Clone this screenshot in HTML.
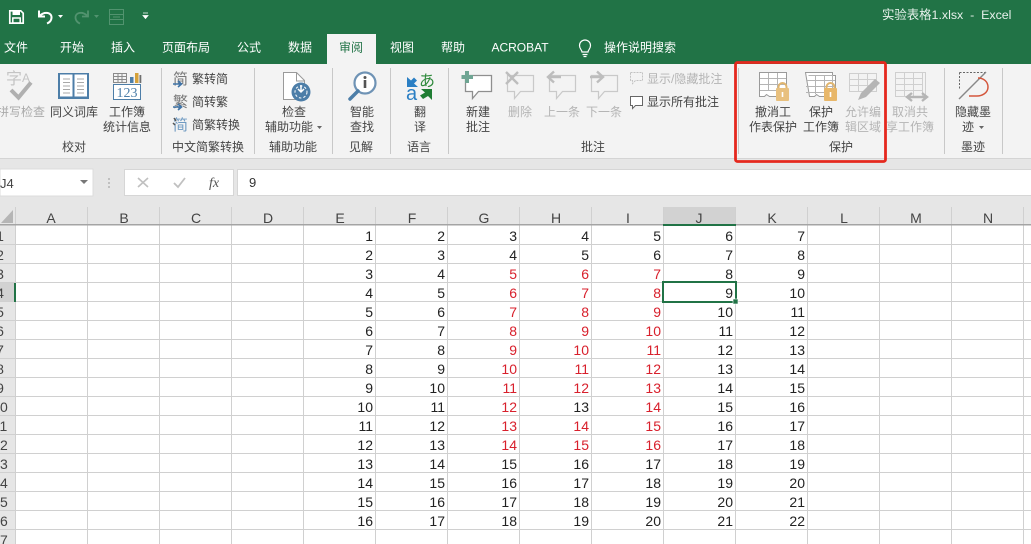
<!DOCTYPE html>
<html lang="zh"><head><meta charset="utf-8"><title>实验表格1.xlsx - Excel</title>
<style>
html,body{margin:0;padding:0;width:1031px;height:544px;overflow:hidden;background:#fff}
svg{display:block}
text{font-family:"Liberation Sans","Noto Sans CJK SC",sans-serif}
.t{font-size:12px;fill:#444;text-anchor:middle}
.g{font-size:12px;fill:#b4b4b4;text-anchor:middle}
.l{font-size:12px;fill:#444}
.tab{font-size:12px;fill:#fff;text-anchor:middle}
.h{font-size:14px;fill:#444;text-anchor:middle}
.rh{font-size:14px;fill:#444;text-anchor:middle}
.c text{font-size:14px;fill:#222;text-anchor:end}
.c text.r{fill:#d8202c}
</style></head><body>
<svg width="1031" height="544" viewBox="0 0 1031 544" xmlns="http://www.w3.org/2000/svg">
<!-- backgrounds -->
<rect width="1031" height="64" fill="#217346"/>
<rect x="327" y="34" width="49" height="31" fill="#f3f3f3"/>
<rect y="64" width="1031" height="94" fill="#f3f3f3"/>
<rect y="158" width="1031" height="49" fill="#e6e6e6"/>
<rect y="158" width="1031" height="1" fill="#d4d4d4"/>
<rect y="207" width="1031" height="18" fill="#e6e6e6"/>
<rect x="0" y="225" width="15" height="319" fill="#e6e6e6"/>

<!-- quick access -->
<g fill="none" stroke="#fff">
<path d="M9.8 10.8h11l2.4 2.4v10h-13.4z" stroke-width="1.7"/>
<rect x="12.5" y="11" width="7.5" height="4" fill="#fff" stroke="none"/>
<rect x="12.8" y="18" width="7.4" height="5" stroke-width="1.5"/>
<path d="M40 15.5c5-4.5 12-3 11.500 2.500-.3 3-2 4.500-4.500 5.500" stroke-width="2"/>
<path d="M39 10.500v6h6" stroke-width="2"/>
</g>
<path d="M58 15h5l-2.500 3z" fill="#fff"/>
<g fill="none" stroke="#52936f" stroke-width="1.800">
<path d="M87 15.500c-5-4.500-12-3-11.500 2.500.3 3 2 4.500 4.500 5.500"/><path d="M88 10.500v6h-6"/>
</g>
<path d="M94 15h5l-2.500 3z" fill="#52936f"/>
<g fill="none" stroke="#52936f"><rect x="109.500" y="9.500" width="14" height="15"/><path d="M110 14.500h13M110 19.500h13M113 17h7"/></g>
<path d="M143 13h5M143 15.500h5l-2.500 3z" fill="#fff" stroke="#fff" stroke-width=".8"/>

<!-- title -->
<text x="882" y="19" font-size="12.400" fill="#e6f0ea" xml:space="preserve">实验表格1.xlsx  -  Excel</text>

<!-- tabs -->
<text class="tab" x="16" y="51.500">文件</text>
<text class="tab" x="72" y="51.500">开始</text>
<text class="tab" x="123" y="51.500">插入</text>
<text class="tab" x="186" y="51.500">页面布局</text>
<text class="tab" x="249" y="51.500">公式</text>
<text class="tab" x="300" y="51.500">数据</text>
<text class="tab" x="351" y="51.500" style="fill:#217346">审阅</text>
<text class="tab" x="402" y="51.500">视图</text>
<text class="tab" x="453" y="51.500">帮助</text>
<text class="tab" x="520" y="51.500">ACROBAT</text>
<g fill="none" stroke="#fff" stroke-width="1.200"><path d="M582 52c0-2-2.500-3-2.500-6.500a5.500 5.500 0 0 1 11 0c0 3.500-2.500 4.500-2.500 6.500z"/><path d="M582.500 54.500h5M583.500 56.500h3"/></g>
<text class="tab" x="640" y="51.500">操作说明搜索</text>

<!-- separators -->
<g stroke="#c8c8c8"><path d="M161.500 68v86M254.500 68v86M332.500 68v86M390.500 68v86M448.500 68v86M738.500 68v86M944.500 68v86M1002.500 68v86"/></g>

<!-- spell -->
<text x="6" y="84" font-size="16" fill="#c4c4c4">字</text><text x="22" y="82" font-size="12" fill="#c4c4c4">A</text>
<path d="M11 90l7.500 7.500 12.500-15" fill="none" stroke="#b0b0b0" stroke-width="4"/>
<!-- book -->
<path d="M58 73h31v26H58z" fill="#4d7ea8"/>
<path d="M60 74.500h12.500v22H60zM74.500 74.500H87v22H74.500z" fill="#fff"/>
<path d="M63 79h7M63 82.500h7M63 86h7M63 89.500h7M63 93h7M77 79h7M77 82.500h7M77 86h7M77 89.500h7M77 93h7" stroke="#a8a8a8"/>
<!-- stats -->
<g fill="none" stroke="#8a8a8a"><rect x="113.500" y="73.500" width="13" height="9"/><path d="M113 76.500h14M113 79.500h14M118 73v10M122 73v10"/></g>
<rect x="130" y="77" width="3.500" height="6" fill="#4d7ea8"/><rect x="135" y="73" width="3.500" height="10" fill="#d5a13a"/><rect x="139.500" y="75" width="1.800" height="8" fill="#6f6f6f"/>
<rect x="113.500" y="84.500" width="27" height="15" fill="#fff" stroke="#4d7ea8"/>
<text x="127" y="97" font-size="14" fill="#4d7ea8" text-anchor="middle" style="font-family:'Liberation Serif',serif">123</text>
<text class="g" x="21" y="116" style="fill:#a9a9a9">拼写检查</text>
<text class="t" x="74" y="116">同义词库</text>
<text class="t" x="127" y="116">工作簿</text>
<text class="t" x="127" y="131">统计信息</text>
<text class="t" x="74" y="151">校对</text>

<!-- convert -->
<text x="173" y="84" font-size="15" fill="#777">简</text>
<path d="M173 84h8M178 81l3.500 3-3.500 3" fill="none" stroke="#3f74a8" stroke-width="1.600"/>
<text x="173" y="107" font-size="15" fill="#777">繁</text>
<path d="M173 107h8M178 104l3.500 3-3.500 3" fill="none" stroke="#3f74a8" stroke-width="1.600"/>
<text x="173" y="130" font-size="15" fill="#6f9ac2">简</text>
<path d="M174 118l2 3M173 123l2 2" stroke="#555" stroke-width="1.500"/>
<text class="l" x="192" y="83">繁转简</text>
<text class="l" x="192" y="106">简转繁</text>
<text class="l" x="192" y="129">简繁转换</text>
<text class="t" x="208" y="151">中文简繁转换</text>

<!-- accessibility -->
<path d="M283.500 72.500h13l8 8v19h-21z" fill="#fff" stroke="#9a9a9a"/>
<path d="M296.500 73v8h8" fill="none" stroke="#9a9a9a"/>
<circle cx="301" cy="92" r="9.500" fill="#4d7ea8"/>
<circle cx="301" cy="92" r="6" fill="none" stroke="#fff" stroke-width="1" stroke-dasharray="2.500 2"/>
<path d="M301 85v6M298 89l3 3 3-3" fill="none" stroke="#fff" stroke-width="1.500"/>
<text class="t" x="294" y="116">检查</text>
<text class="t" x="289" y="131">辅助功能</text>
<path d="M317 126h5l-2.500 3z" fill="#666"/>
<text class="t" x="293" y="151">辅助功能</text>

<!-- smart lookup -->
<circle cx="365" cy="83" r="10.500" fill="#fff" stroke="#6f93b5" stroke-width="2.200"/>
<path d="M358 91l-8 8" stroke="#4d7ea8" stroke-width="3.500" stroke-linecap="round"/>
<circle cx="365" cy="77.500" r="1.500" fill="#555"/><rect x="363.700" y="80" width="2.600" height="8" fill="#555"/>
<text class="t" x="362" y="116">智能</text>
<text class="t" x="362" y="131">查找</text>
<text class="t" x="361" y="151">见解</text>

<!-- translate -->
<text x="419" y="86" font-size="16" fill="#2f8a3c">あ</text>
<text x="406" y="100" font-size="20" fill="#2b7fc4">a</text>
<path d="M407 77v10h11l-4-3.500 3-3-3-3-3 3z" fill="#2b7fc4"/>
<path d="M432 100V89h-11l4 3.500-5 3 3 3.500 5-3z" fill="#1f7d33"/>
<text class="t" x="420" y="116">翻</text>
<text class="t" x="420" y="131">译</text>
<text class="t" x="419" y="151">语言</text>

<!-- comments -->
<path d="M465.500 75.500h26v16h-13l-6 7v-7h-7z" fill="#fff" stroke="#8f8f8f" stroke-width="1.300"/>
<path d="M467 71v12M461.500 77h11.500" stroke="#6fa593" stroke-width="4"/>
<text class="t" x="478" y="116">新建</text>
<text class="t" x="478" y="131">批注</text>
<path d="M507.500 75.500h26v16h-13l-6 7v-7h-7z" fill="none" stroke="#c9c9c9" stroke-width="1.200"/>
<path d="M506 72l12 12M518 72l-12 12" stroke="#bdbdbd" stroke-width="2.400"/>
<text class="g" x="520" y="116">删除</text>
<path d="M549.500 75.500h26v16h-13l-6 7v-7h-7z" fill="none" stroke="#c9c9c9" stroke-width="1.200"/>
<path d="M548 77h13M554 71.500l-6 5.500 6 5.500" fill="none" stroke="#bdbdbd" stroke-width="2.400"/>
<text class="g" x="562" y="116">上一条</text>
<path d="M591.500 75.500h26v16h-13l-6 7v-7h-7z" fill="none" stroke="#c9c9c9" stroke-width="1.200"/>
<path d="M590 77h13M597 71.500l6 5.500-6 5.500" fill="none" stroke="#bdbdbd" stroke-width="2.400"/>
<text class="g" x="604" y="116">下一条</text>
<path d="M630.500 72.500h12v8h-7l-3 3v-3h-2z" fill="none" stroke="#c2c2c2" stroke-dasharray="2 1"/>
<text class="g" x="647" y="83" style="text-anchor:start">显示/隐藏批注</text>
<path d="M630.500 96.500h12v9h-7l-3 3v-3h-2z" fill="#fff" stroke="#666"/>
<text class="l" x="647" y="106">显示所有批注</text>
<text class="t" x="593" y="151">批注</text>

<!-- protect icons -->
<g fill="#fff" stroke="#9a9a9a">
<path d="M759.500 72.500h27v24h-17l-3-2-2 2h-5z"/>
<path d="M760 78.500h26M760 84.500h26M760 90.500h26M768.500 73v18M777.500 73v18" fill="none" stroke="#b4b4b4"/>
<path d="M805.500 72.500h27v3h3v21h-16l-3-2-2 2h-5z" fill="#fff"/>
<path d="M808.500 75.500h24v21M806 80.500h29M806 86.500h29M806 92.500h29M815.500 76v18M824.500 76v18" fill="none" stroke="#b4b4b4"/>
</g>
<g>
<rect x="776" y="88" width="13" height="13" rx="1" fill="#e8c07e"/>
<path d="M778.500 88v-1a4 4 0 0 1 8 0v1" fill="none" stroke="#e0b56e" stroke-width="2"/>
<rect x="781.700" y="92" width="1.600" height="5" fill="#fff"/>
<rect x="824" y="88" width="13" height="13" rx="1" fill="#e8b76a"/>
<path d="M826.500 88v-1a4 4 0 0 1 8 0v1" fill="none" stroke="#e0b56e" stroke-width="2"/>
<rect x="829.700" y="92" width="1.600" height="5" fill="#fff"/>
</g>
<g fill="none" stroke="#cfcfcf">
<path d="M849.500 73.500h27v18h-27zM850 79.500h26M850 85.500h26M858.500 74v17M867.500 74v17"/>
</g>
<path d="M858 100l3-7 14-14 5 4-14 14z" fill="#b5b5b5"/>
<g fill="none" stroke="#cfcfcf">
<path d="M895.500 72.500h27v24h-27zM896 78.500h26M896 84.500h26M896 90.500h26M904.500 73v23M913.500 73v23M898.500 72.500h27v22"/>
</g>
<path d="M908 97h18M912 93l-5 4 5 4M922 93l5 4-5 4" fill="none" stroke="#b5b5b5" stroke-width="2.400"/>
<text class="t" x="773" y="116">撤消工</text>
<text class="t" x="773" y="131">作表保护</text>
<text class="t" x="821" y="116">保护</text>
<text class="t" x="821" y="131">工作簿</text>
<text class="g" x="863" y="116">允许编</text>
<text class="g" x="863" y="131">辑区域</text>
<text class="g" x="910" y="116">取消共</text>
<text class="g" x="910" y="131">享工作簿</text>
<text class="t" x="841" y="151">保护</text>

<!-- ink -->
<path d="M959.500 72.500h26M959.500 72.500v17" fill="none" stroke="#666" stroke-dasharray="2 1.500"/>
<path d="M959 99l27-27" stroke="#888" stroke-width="1.400"/>
<path d="M978 78c6 0 10 4 10 9 0 6-6 9-11 9h-8" fill="none" stroke="#d4563c" stroke-width="1.500"/>
<text class="t" x="973" y="116">隐藏墨</text>
<text class="t" x="968" y="131">迹</text>
<path d="M979 126h5l-2.500 3z" fill="#666"/>
<text class="t" x="973" y="151">墨迹</text>

<!-- red highlight -->
<rect x="735.500" y="62.500" width="150" height="99" rx="2" fill="none" stroke="#e5281e" stroke-width="2.800"/>

<!-- formula bar -->
<rect x="0" y="169" width="93" height="27" fill="#fff" stroke="#dcdcdc"/>
<text x="0" y="188" font-size="13" fill="#444">J4</text>
<path d="M80 180h8l-4 4z" fill="#777"/>
<circle cx="109" cy="179" r="1" fill="#b5b5b5"/><circle cx="109" cy="183" r="1" fill="#b5b5b5"/><circle cx="109" cy="187" r="1" fill="#b5b5b5"/>
<rect x="124.500" y="169.500" width="109" height="26" fill="#fff" stroke="#d6d6d6"/>
<path d="M138 178l10 9M148 178l-10 9" stroke="#c0c0c0" stroke-width="1.600"/>
<path d="M174 183l4 4 7-9" fill="none" stroke="#c0c0c0" stroke-width="1.800"/>
<text x="209" y="187" font-size="14" fill="#555" style="font-family:'Liberation Serif',serif;font-style:italic">fx</text>
<rect x="237.500" y="169.500" width="794" height="26" fill="#fff" stroke="#d6d6d6"/>
<text x="249" y="187" font-size="13" fill="#333">9</text>

<!-- sheet headers -->
<path d="M13 210v13H1z" fill="#b5b5b5"/>
<rect x="664" y="207" width="71" height="18" fill="#d2d2d2"/>
<rect x="0" y="283" width="15" height="18" fill="#d2d2d2"/>
<g stroke="#d0d0d0">
<path d="M15.500 207v337M87.500 207v337M159.500 207v337M231.500 207v337M303.500 207v337M375.500 207v337M447.500 207v337M519.500 207v337M591.500 207v337M663.500 207v337M735.500 207v337M807.500 207v337M879.500 207v337M951.500 207v337M1023.500 207v337"/>
<path d="M0 244.500h1031M0 263.500h1031M0 282.500h1031M0 301.500h1031M0 320.500h1031M0 339.500h1031M0 358.500h1031M0 377.500h1031M0 396.500h1031M0 415.500h1031M0 434.500h1031M0 453.500h1031M0 472.500h1031M0 491.500h1031M0 510.500h1031M0 529.500h1031"/>
</g>
<rect x="0" y="224" width="1031" height="1.500" fill="#a4a4a4"/>
<rect x="663" y="224" width="73" height="2" fill="#217346"/>
<rect x="14" y="283" width="2" height="19" fill="#217346"/>
<g>
<text class="h" x="51" y="223">A</text><text class="h" x="124" y="223">B</text><text class="h" x="196" y="223">C</text><text class="h" x="268" y="223">D</text><text class="h" x="340" y="223">E</text><text class="h" x="412" y="223">F</text><text class="h" x="484" y="223">G</text><text class="h" x="556" y="223">H</text><text class="h" x="628" y="223">I</text><text class="h" x="699" y="223">J</text><text class="h" x="772" y="223">K</text><text class="h" x="844" y="223">L</text><text class="h" x="916" y="223">M</text><text class="h" x="988" y="223">N</text>
</g>
<g>
<text class="rh" x="0" y="241">1</text><text class="rh" x="0" y="260">2</text><text class="rh" x="0" y="279">3</text><text class="rh" x="0" y="298">4</text><text class="rh" x="0" y="317">5</text><text class="rh" x="0" y="336">6</text><text class="rh" x="0" y="355">7</text><text class="rh" x="0" y="374">8</text><text class="rh" x="0" y="393">9</text><text class="rh" x="0" y="412">10</text><text class="rh" x="0" y="431">11</text><text class="rh" x="0" y="450">12</text><text class="rh" x="0" y="469">13</text><text class="rh" x="0" y="488">14</text><text class="rh" x="0" y="507">15</text><text class="rh" x="0" y="526">16</text><text class="rh" x="0" y="545">17</text>
</g>

<!-- cells -->
<g class="c">
<g transform="translate(0,241)"><text x="373">1</text><text x="445">2</text><text x="517">3</text><text x="589">4</text><text x="661">5</text><text x="733">6</text><text x="805">7</text></g>
<g transform="translate(0,260)"><text x="373">2</text><text x="445">3</text><text x="517">4</text><text x="589">5</text><text x="661">6</text><text x="733">7</text><text x="805">8</text></g>
<g transform="translate(0,279)"><text x="373">3</text><text x="445">4</text><text class="r" x="517">5</text><text class="r" x="589">6</text><text class="r" x="661">7</text><text x="733">8</text><text x="805">9</text></g>
<g transform="translate(0,298)"><text x="373">4</text><text x="445">5</text><text class="r" x="517">6</text><text class="r" x="589">7</text><text class="r" x="661">8</text><text x="733">9</text><text x="805">10</text></g>
<g transform="translate(0,317)"><text x="373">5</text><text x="445">6</text><text class="r" x="517">7</text><text class="r" x="589">8</text><text class="r" x="661">9</text><text x="733">10</text><text x="805">11</text></g>
<g transform="translate(0,336)"><text x="373">6</text><text x="445">7</text><text class="r" x="517">8</text><text class="r" x="589">9</text><text class="r" x="661">10</text><text x="733">11</text><text x="805">12</text></g>
<g transform="translate(0,355)"><text x="373">7</text><text x="445">8</text><text class="r" x="517">9</text><text class="r" x="589">10</text><text class="r" x="661">11</text><text x="733">12</text><text x="805">13</text></g>
<g transform="translate(0,374)"><text x="373">8</text><text x="445">9</text><text class="r" x="517">10</text><text class="r" x="589">11</text><text class="r" x="661">12</text><text x="733">13</text><text x="805">14</text></g>
<g transform="translate(0,393)"><text x="373">9</text><text x="445">10</text><text class="r" x="517">11</text><text class="r" x="589">12</text><text class="r" x="661">13</text><text x="733">14</text><text x="805">15</text></g>
<g transform="translate(0,412)"><text x="373">10</text><text x="445">11</text><text class="r" x="517">12</text><text x="589">13</text><text class="r" x="661">14</text><text x="733">15</text><text x="805">16</text></g>
<g transform="translate(0,431)"><text x="373">11</text><text x="445">12</text><text class="r" x="517">13</text><text class="r" x="589">14</text><text class="r" x="661">15</text><text x="733">16</text><text x="805">17</text></g>
<g transform="translate(0,450)"><text x="373">12</text><text x="445">13</text><text class="r" x="517">14</text><text class="r" x="589">15</text><text class="r" x="661">16</text><text x="733">17</text><text x="805">18</text></g>
<g transform="translate(0,469)"><text x="373">13</text><text x="445">14</text><text x="517">15</text><text x="589">16</text><text x="661">17</text><text x="733">18</text><text x="805">19</text></g>
<g transform="translate(0,488)"><text x="373">14</text><text x="445">15</text><text x="517">16</text><text x="589">17</text><text x="661">18</text><text x="733">19</text><text x="805">20</text></g>
<g transform="translate(0,507)"><text x="373">15</text><text x="445">16</text><text x="517">17</text><text x="589">18</text><text x="661">19</text><text x="733">20</text><text x="805">21</text></g>
<g transform="translate(0,526)"><text x="373">16</text><text x="445">17</text><text x="517">18</text><text x="589">19</text><text x="661">20</text><text x="733">21</text><text x="805">22</text></g>
</g>

<!-- selection -->
<rect x="663" y="282" width="73" height="20" fill="none" stroke="#217346" stroke-width="2"/>
<rect x="733" y="299" width="5" height="5" fill="#217346" stroke="#fff" stroke-width=".6"/>
</svg>
</body></html>
